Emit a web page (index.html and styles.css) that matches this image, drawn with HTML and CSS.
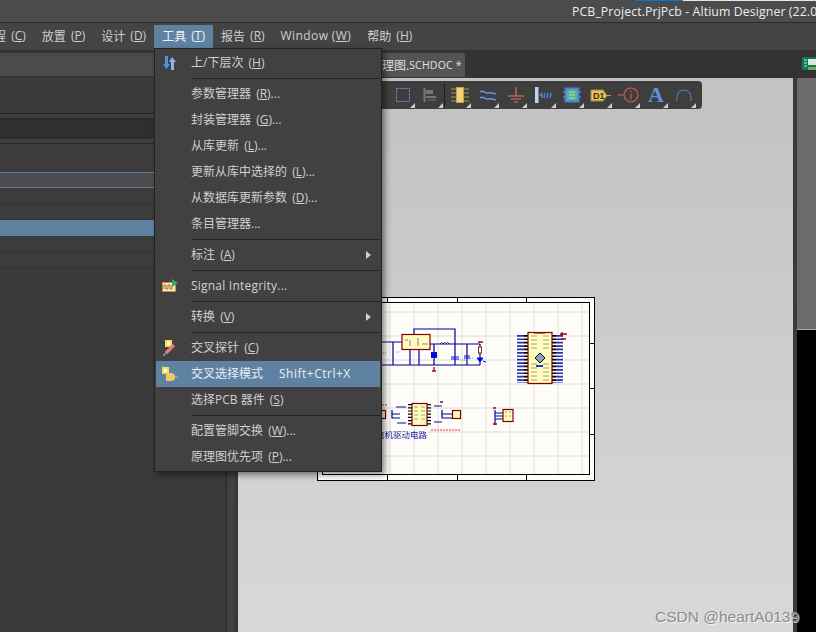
FILE: index.html
```html
<!DOCTYPE html>
<html lang="zh">
<head>
<meta charset="utf-8">
<title>PCB_Project.PrjPcb - Altium Designer</title>
<link rel="stylesheet" href="styles.css">
</head>
<body>
<div class="app">
  <header class="titlebar">
    <span class="title-text">PCB_Project.PrjPcb - Altium Designer (22.0</span>
    <i class="accent-blue"></i><i class="accent-white"></i>
  </header>

  <nav class="menubar">
    <span class="mb-item">工程<span class="k"> (<u>C</u>)</span></span>
    <span class="mb-item">放置<span class="k"> (<u>P</u>)</span></span>
    <span class="mb-item">设计<span class="k"> (<u>D</u>)</span></span>
    <span class="mb-item active">工具<span class="k"> (<u>T</u>)</span></span>
    <span class="mb-item">报告<span class="k"> (<u>R</u>)</span></span>
    <span class="mb-item win">Window (<u>W</u>)</span>
    <span class="mb-item">帮助<span class="k"> (<u>H</u>)</span></span>
  </nav>

  <div class="tabband">
    <div class="panel-head"></div>
    <div class="doc-tab"><span class="tab-cjk">原理图.</span><span class="tab-latin">SCHDOC *</span></div>
    <svg class="pcb-icon" width="14" height="13" viewBox="0 0 14 13">
      <rect x="0" y="0" width="14" height="13" fill="#0f7a52"/>
      <path d="M2 3h3M2 6h3M2 9h3" stroke="#c8f0d8" stroke-width="1"/>
      <rect x="6" y="2" width="8" height="6" fill="#d8e8e0"/>
      <path d="M7 10v3M9 10v3M11 10v3M13 10v3" stroke="#e8d060" stroke-width="1"/>
    </svg>
  </div>

  <div class="workspace">
    <aside class="panel">
      <div class="p-block p-top"></div>
      <div class="p-block p-gap"></div>
      <div class="p-block p-dark"></div>
      <div class="p-block p-gap"></div>
      <div class="p-block p-body"></div>
      <div class="p-block p-focus"></div>
      <div class="p-block p-row r1"></div>
      <div class="p-block p-row"></div>
      <div class="p-block p-sel"></div>
      <div class="p-block p-row"></div>
      <div class="p-block p-row"></div>
    </aside>
    <div class="strip"></div>

    <main class="canvas">
      <svg class="sheet" width="278" height="184" viewBox="317 297 278 184">
        <rect x="317.500" y="297.500" width="277" height="183" fill="#fffdf9" stroke="#000"/>
        <rect x="322.500" y="302.500" width="267" height="172" fill="none" stroke="#000"/>
        <path class="grid" d="M342 303V474M366 303V474M390 303V474M414 303V474M438 303V474M462 303V474M486 303V474M510 303V474M534 303V474M558 303V474M582 303V474M323 312H589M323 336H589M323 360H589M323 384H589M323 408H589M323 432H589M323 456H589"/>
        <path class="ticks" d="M387.500 297V302M457.500 297V302M526.500 297V302M387.500 475V480M457.500 475V480M526.500 475V480M590 343.500H595M590 388.500H595M590 434.500H595M318 343.500H322M318 388.500H322M318 434.500H322"/>

        <path class="wire" d="M382 342H402M382 365H480M430 344H480M414 334V329H455V344M393 342V365M410 349V365M419 349V365M434 344V365M455 344V365M467 344V365M480 344V347M480 353V358M480 362V365"/>
        <rect class="chip" x="402" y="334.500" width="28" height="15"/>
        <path class="pinmark" d="M410 340v6M418 338v8M422 344h6M405 340h3"/>
        <path class="inductor" d="M440 344q2-3 3 0q2-3 3 0q2-3 3 0"/>
        <path class="blue-bold" d="M451 357h8M451 359h8M464 356h6M464 358h6M477 358h6l-3 4z"/>
        <path class="blue-bold" d="M483 361l3 1"/>
        <rect class="blue-fill" x="431" y="352" width="6" height="6"/>
        <rect class="outline-red" x="478.500" y="347" width="3" height="6"/>
        <path class="red-mark" d="M434 367v3M432 371h4M478 342h5"/>
        <path class="blue-dots" d="M383 353h4M396 352h4M460 360h8M470 358h4"/>

        <line class="pin-stubs" x1="520.500" y1="335" x2="520.500" y2="383"/>
        <line class="pin-stubs" x1="559.500" y1="335" x2="559.500" y2="383"/>
        <line class="mcu-pins" x1="526" y1="335" x2="526" y2="383"/>
        <line class="mcu-pins" x1="554" y1="335" x2="554" y2="383"/>
        <rect class="chip" x="528" y="332.500" width="24" height="51"/>
        <path class="chip-text" d="M531 336h6M543 336h6M531 340h6M543 340h6M531 344h6M543 344h6M531 348h6M543 348h6M531 364h6M543 364h6M531 368h6M543 368h6M531 372h6M543 372h6M531 376h6M543 376h6M531 380h6M543 380h6"/>
        <path class="diamond" d="M540 353l5 5-5 5-5-5z"/>
        <rect x="536" y="365" width="7" height="2" fill="#1a40c0"/>
        <rect x="534" y="332" width="11" height="1.500" fill="#800000"/>
        <path class="red-mark" d="M560 334h7M562 332v4M561 339h5"/>

        <rect class="chip" x="381" y="410.500" width="4.500" height="8"/>
        <rect class="chip" x="452.500" y="410.500" width="8" height="8"/>
        <path class="wire" d="M392 414H400M392 410V418H400M442 414H452M442 410V418H452"/>
        <path class="wire-thick" d="M396 407H406M397 423H406M434 406H442M434 422H442"/>
        <line class="mcu-pins short" x1="410" y1="404" x2="410" y2="425"/>
        <line class="mcu-pins short" x1="429" y1="404" x2="429" y2="425"/>
        <rect class="chip" x="412" y="403.500" width="15" height="22"/>
        <path class="chip-text" d="M414 407h4M421 407h4M414 411h4M421 411h4M414 415h4M421 415h4M414 419h4M421 419h4"/>
        <path class="wire-thick" d="M495 413H503M495 416H503M495 419H503M495 410V422"/>
        <rect class="chip" x="503" y="409.500" width="10" height="12"/>
        <path class="chip-text" d="M505 412h2M509 412h2M505 416h2M509 416h2"/>
        <path class="red-mark" d="M495 422v3M493 424h4M440 402h3M493 408h3"/>
        <path class="pink" d="M431 430h30M382 405h6"/>
        <text class="sch-label" x="376" y="438">电机驱动电路</text>
      </svg>

      <div class="toolbar">
        <span class="tb-btn"><svg width="16" height="16" viewBox="0 0 16 16"><rect x="1.500" y="1.500" width="13" height="13" fill="none" stroke="#6f8fd8" stroke-dasharray="2 1"/></svg></span>
        <span class="tb-btn sep"><svg width="16" height="16" viewBox="0 0 16 16"><path d="M1.500 1v14" stroke="#777" stroke-width="2"/><path d="M3 3h7v4H3zM3 9h10v2H3z" fill="#777"/><path d="M5 13h8" stroke="#777"/></svg></span>
        <span class="tb-btn nudge"><svg width="18" height="18" viewBox="0 0 18 18"><path d="M0 3h18M0 7h18M0 11h18M0 15h18" stroke="#a89450"/><rect x="5.500" y="1.500" width="7" height="15" fill="#f4d080" stroke="#c8a040"/></svg></span>
        <span class="tb-btn nudge"><svg width="17" height="12" viewBox="0 0 17 12"><path d="M0 3c3-3 5 2 8 1 3-1 5 0 8 1M0 9c3-3 5 2 8 1 3-1 5 0 8 1" fill="none" stroke="#5a9ae0" stroke-width="1.500"/></svg></span>
        <span class="tb-btn nudge"><svg width="16" height="16" viewBox="0 0 16 16"><path d="M8 0v9M0 9h16M3 12h10M6 15h4" fill="none" stroke="#e07868" stroke-width="1.100"/></svg></span>
        <span class="tb-btn"><svg width="18" height="16" viewBox="0 0 18 16"><rect x="0" y="0" width="3.500" height="16" fill="#bcd4f4"/><path d="M4 8h3M7 5v6" stroke="#6a9ae0"/><path d="M9 11l1-5M12 11l1-5M15 11l1-5" stroke="#4a80d8" stroke-width="1.500"/></svg></span>
        <span class="tb-btn"><svg width="18" height="16" viewBox="0 0 18 16"><rect x="2.500" y="1.500" width="13" height="13" fill="#58b090" stroke="#4a80e0" stroke-width="2"/><path d="M0 5h2M0 10h2M16 5h2M16 10h2" stroke="#4a80e0" stroke-width="1.400"/><path d="M6 5h6M6 8h6M6 11h6" stroke="#a8e0c8"/></svg></span>
        <span class="tb-btn nudge"><svg width="21" height="13" viewBox="0 0 21 13"><path d="M1 1h12l4 5.500-4 5.500H1z" fill="#e4c060" stroke="#a88a30"/><path d="M17 6.500h4" stroke="#c8a040"/><text class="d1" x="3" y="10">D1</text></svg></span>
        <span class="tb-btn nudge"><svg width="22" height="16" viewBox="0 0 22 16"><circle cx="13" cy="8" r="7" fill="none" stroke="#d85a5a" stroke-width="1.100"/><path d="M0 8h6M13 4v1M13 6.500v6" stroke="#d85a5a" stroke-width="1.100"/></svg></span>
        <span class="tb-btn"><span class="tb-a">A</span></span>
        <span class="tb-btn"><svg width="16" height="12" viewBox="0 0 16 12"><path d="M1 12V8a7 7 0 0 1 14 0v4" fill="none" stroke="#4a78c8" stroke-width="1.200"/></svg></span>
      </div>
    </main>

    <div class="right-gap"></div>
    <aside class="right-pane">
      <div class="rp-grey"></div>
      <div class="rp-black"></div>
    </aside>
  </div>

  <div class="menu">
    <div class="m-item"><svg class="m-icon" width="14" height="14" viewBox="0 0 14 14"><path d="M3 0h3v8h2l-3.500 5L1 8h2z" fill="#5a8ee0"/><path d="M10 1l4 5h-2v8H9V6H7z" fill="#8ab4ee"/></svg>上/下层次<span class="k"> (<u>H</u>)</span></div>
    <div class="m-sep"></div>
    <div class="m-item">参数管理器<span class="k"> (<u>R</u>)...</span></div>
    <div class="m-item">封装管理器<span class="k"> (<u>G</u>)...</span></div>
    <div class="m-item">从库更新<span class="k"> (<u>L</u>)...</span></div>
    <div class="m-item">更新从库中选择的<span class="k"> (<u>L</u>)...</span></div>
    <div class="m-item">从数据库更新参数<span class="k"> (<u>D</u>)...</span></div>
    <div class="m-item">条目管理器...</div>
    <div class="m-sep"></div>
    <div class="m-item has-sub">标注<span class="k"> (<u>A</u>)</span></div>
    <div class="m-sep"></div>
    <div class="m-item"><svg class="m-icon" width="16" height="14" viewBox="0 0 16 14"><rect x="0.500" y="3.500" width="13" height="9" fill="#f4ead0" stroke="#d08a30"/><path d="M2 10V6h2v4h2V6h2v4h2V6h2" fill="none" stroke="#b06a20"/><path d="M10 0l6 4-6 4z" fill="#28b058"/></svg><span class="wide">Signal Integrity...</span></div>
    <div class="m-sep"></div>
    <div class="m-item has-sub">转换<span class="k"> (<u>V</u>)</span></div>
    <div class="m-sep"></div>
    <div class="m-item"><svg class="m-icon" width="14" height="16" viewBox="0 0 14 16"><rect x="3" y="0" width="7" height="7" fill="#f4e060"/><rect x="5" y="2" width="3" height="3" fill="#fffbe0"/><path d="M12 5L4 13" stroke="#e07a70" stroke-width="3.500"/><path d="M4 13l-3 3" stroke="#999" stroke-width="1.500"/></svg>交叉探针<span class="k"> (<u>C</u>)</span></div>
    <div class="m-item hi"><svg class="m-icon" width="16" height="14" viewBox="0 0 16 14"><rect x="0" y="0" width="7" height="7" fill="#f4e060"/><rect x="2" y="2" width="3" height="3" fill="#fffbe0"/><path d="M4 6h5a4 4 0 0 1 0 8H4z" fill="#f0c860"/><path d="M13 10h3" stroke="#e0b850"/></svg>交叉选择模式<span class="shortcut">Shift+Ctrl+X</span></div>
    <div class="m-item">选择PCB 器件<span class="k"> (<u>S</u>)</span></div>
    <div class="m-sep"></div>
    <div class="m-item">配置管脚交换<span class="k"> (<u>W</u>)...</span></div>
    <div class="m-item">原理图优先项<span class="k"> (<u>P</u>)...</span></div>
  </div>

  <div class="watermark">CSDN @heartA0139</div>
</div>
</body>
</html>
```

FILE: styles.css
```css
* { box-sizing: border-box; }
html, body { margin: 0; padding: 0; }
body { background: #3a3a3a; }

.app {
  position: relative;
  width: 816px;
  height: 632px;
  overflow: hidden;
  display: flex;
  flex-direction: column;
  font-family: "Open Sans", "Noto Sans CJK SC", sans-serif;
  font-size: 12px;
  color: #d2d2d2;
}

.titlebar {
  position: relative;
  flex: 0 0 23px;
  display: flex;
  align-items: center;
  padding-left: 572px;
  background: #4c4c4c;
  border-bottom: 1px solid #2a2a2a;
  white-space: nowrap;
  overflow: hidden;
}
.title-text { color: #ececec; font-size: 12.3px; letter-spacing: 0.1px; }
.accent-blue, .accent-white { position: absolute; top: 0; height: 1px; }
.accent-blue { left: 635px; width: 48px; background: #0078d7; }
.accent-white { left: 683px; right: 0; background: #e6e6e6; }

.menubar {
  flex: 0 0 27px;
  display: flex;
  align-items: stretch;
  margin-left: -26px;
  padding: 2px 0;
  background: #444;
  white-space: nowrap;
}
.mb-item { display: flex; align-items: center; white-space: pre; padding: 0 8px 2px; color: #d0d0d0; }
.mb-item.active { background: #5f82a3; color: #eef2f6; }
.mb-item.win { letter-spacing: 0.4px; }
.mb-item u, .m-item u { text-underline-offset: 1px; }
.k { padding-left: 2px; }

.tabband {
  position: relative;
  flex: 0 0 28px;
  display: flex;
  align-items: flex-start;
  padding-top: 3px;
  background: #333;
}
.panel-head { width: 226px; height: 23px; background: #4b4b4b; }
.doc-tab {
  display: flex;
  align-items: center;
  margin-left: 124px;
  width: 115px;
  height: 24px;
  padding-left: 20px;
  background: #545454;
  border-top-right-radius: 3px;
  color: #e0e0e0;
  white-space: nowrap;
}
.tab-latin { font-size: 10.5px; letter-spacing: 0.2px; }
.pcb-icon { position: absolute; left: 802px; top: 7px; }

.workspace { flex: 1; display: flex; min-height: 0; }

.panel {
  flex: 0 0 227px;
  display: flex;
  flex-direction: column;
  background: #3a3a3a;
  border-right: 1px solid #272727;
}
.p-block { flex: none; }
.p-top { height: 36px; background: #3b3b3b; border-bottom: 1px solid #252525; }
.p-gap { height: 5px; background: #3e3e3e; border-bottom: 1px solid #2a2a2a; }
.p-dark { height: 20px; background: #2f2f2f; }
.p-body { height: 28px; background: #3c3c3c; }
.p-focus { height: 16px; background: #4c4c4c; border-top: 1px solid #5f82a3; border-bottom: 1px solid #5f82a3; }
.p-row { height: 16px; background: #3c3c3c; border-bottom: 1px solid #353535; }
.p-row.r1 { height: 16px; }
.p-sel { height: 16px; background: #5f82a3; }

.strip { flex: 0 0 11px; background: #404040; border-right: 3px solid #383838; }

.canvas {
  position: relative;
  flex: 0 0 555px;
  background: linear-gradient(#c2c2c2, #d8d8d8);
  overflow: hidden;
}
.sheet { position: absolute; left: 79px; top: 219px; filter: blur(0.3px); }
.grid { stroke: #dedcd8; fill: none; }
.ticks { stroke: #000; fill: none; }
.wire { stroke: #000090; fill: none; stroke-width: 1.2; }
.wire-thick { stroke: #0808a0; fill: none; stroke-width: 1.2; }
.chip { fill: #fffcc0; stroke: #800000; stroke-width: 1.2; }
.chip-text { stroke: #9a9a70; stroke-width: 0.9; fill: none; }
.pinmark { stroke: #555; stroke-width: 0.7; fill: none; }
.inductor { stroke: #000090; fill: #fffdf9; stroke-width: 1; }
.blue-bold { stroke: #0010d0; fill: #0010d0; stroke-width: 1; }
.blue-fill { fill: #0010d0; }
.blue-dots { stroke: #6a7ad8; stroke-width: 1; fill: none; stroke-dasharray: 1 1; }
.outline-red { fill: #fffdf9; stroke: #600000; stroke-width: 0.8; }
.red-mark { stroke: #900808; fill: none; stroke-width: 1.3; }
.mcu-pins { stroke: #000; stroke-width: 4; stroke-dasharray: 1.7 1.7; }
.mcu-pins.short { stroke-dasharray: 1.2 2; }
.pin-stubs { stroke: #2a30b0; stroke-width: 7; stroke-dasharray: 1.7 1.7; }
.diamond { fill: #8aa0c0; stroke: #111; stroke-width: 1; }
.pink { stroke: #f07080; stroke-width: 1.5; fill: none; stroke-dasharray: 2 1; }
.sch-label {
  fill: #2020a8;
  font-family: "Noto Sans CJK SC", sans-serif;
  font-size: 8.5px;
}

.toolbar {
  position: absolute;
  left: 140px;
  top: 3px;
  width: 324px;
  height: 28px;
  display: flex;
  align-items: center;
  padding-left: 11px;
  background: #3e3e3e;
  border-radius: 4px;
}
.tb-btn {
  position: relative;
  flex: 0 0 28.100px;
  height: 28px;
  display: flex;
  align-items: center;
  justify-content: center;
}
.tb-btn.nudge { padding-left: 2px; }
.tb-btn::after {
  content: "";
  position: absolute;
  right: 2px;
  bottom: 1px;
  border-style: solid;
  border-width: 0 0 5px 5px;
  border-color: transparent transparent #cfcfcf transparent;
}
.tb-btn.sep::before {
  content: "";
  position: absolute;
  right: 0;
  top: 3px;
  bottom: 3px;
  width: 1px;
  background: #1e1e1e;
}
.tb-a {
  font-family: "Liberation Serif", serif;
  font-weight: 700;
  font-size: 22px;
  line-height: 1;
  color: #5a94e0;
}
.d1 { font-family: "Liberation Sans", sans-serif; font-size: 9px; font-weight: 700; fill: #3a3010; }

.right-gap { flex: 0 0 4px; background: #3a3a3a; }
.right-pane { flex: 1; display: flex; flex-direction: column; }
.rp-grey { flex: 0 0 252px; background: #6d6a6a; border-bottom: 1px solid #a8a8a8; }
.rp-black { flex: 1; background: #000; }

.menu {
  position: absolute;
  left: 154px;
  top: 48px;
  width: 228px;
  height: 424px;
  padding: 1px 1px 2px;
  background: #414141;
  border: 1px solid #222;
  box-shadow: 3px 3px 6px rgba(0, 0, 0, .45);
}
.m-item {
  position: relative;
  height: 26px;
  display: flex;
  align-items: center;
  padding: 0 0 2px 35px;
  white-space: pre;
  color: #d0d0d0;
}
.m-item.hi { background: #5f82a3; color: #eaeef2; }
.m-icon { position: absolute; left: 6px; top: 50%; transform: translateY(-50%); }
.m-sep { height: 5px; margin-left: 36px; position: relative; }
.m-sep::after { content: ""; position: absolute; left: 0; right: 0; top: 2px; height: 1px; background: #252525; }
.has-sub::after {
  content: "";
  position: absolute;
  right: 9px;
  top: 9px;
  border-style: solid;
  border-width: 4px 0 4px 5px;
  border-color: transparent transparent transparent #d0d0d0;
}
.wide { letter-spacing: 0.22px; }
.shortcut { margin-left: 16px; letter-spacing: 0.5px; }

.watermark {
  position: absolute;
  left: 655px;
  top: 608px;
  font-family: "Liberation Sans", sans-serif;
  font-size: 15.5px;
  line-height: 17px;
  color: #8c8c8c;
  text-shadow: 1px 1px 0 rgba(255, 255, 255, .7);
  white-space: nowrap;
}
```
